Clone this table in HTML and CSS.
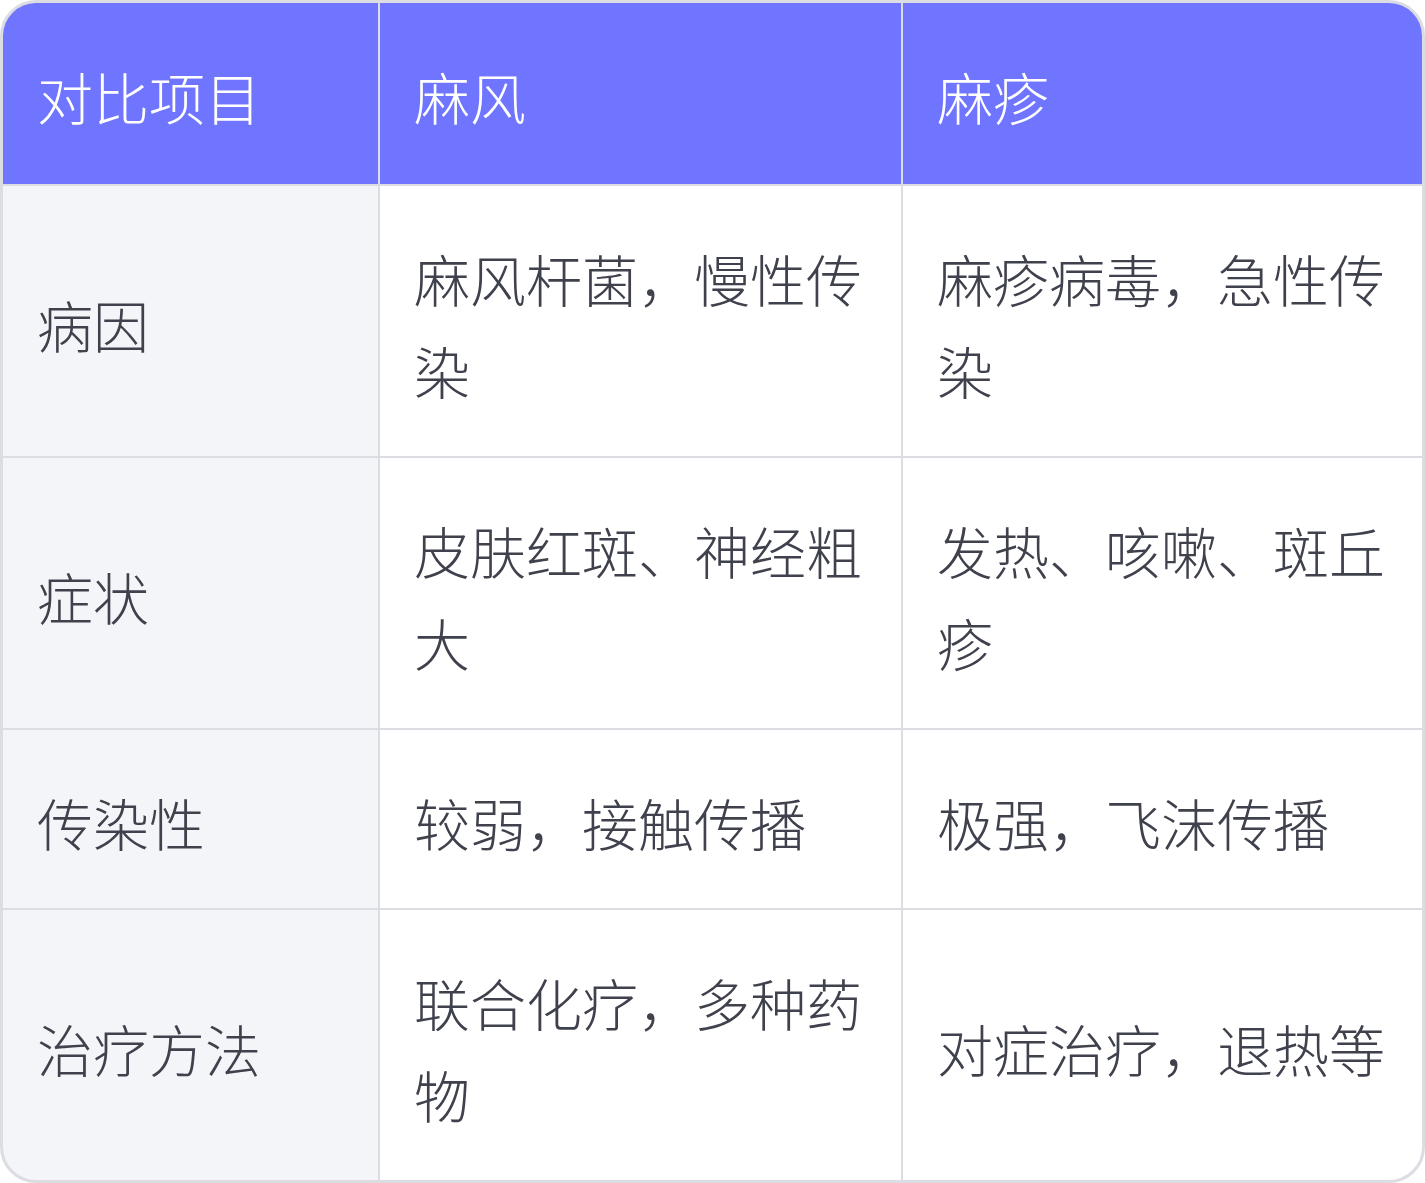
FILE: index.html
```html
<!DOCTYPE html>
<html lang="zh-CN">
<head>
<meta charset="utf-8">
<title>麻风与麻疹对比</title>
<link rel="stylesheet" href="styles.css">
</head>
<body>
<div class="table">
  <div class="cell head">对比项目</div>
  <div class="cell head">麻风</div>
  <div class="cell head">麻疹</div>

  <div class="cell label">病因</div>
  <div class="cell">麻风杆菌，慢性传染</div>
  <div class="cell">麻疹病毒，急性传染</div>

  <div class="cell label">症状</div>
  <div class="cell">皮肤红斑、神经粗大</div>
  <div class="cell">发热、咳嗽、斑丘疹</div>

  <div class="cell label">传染性</div>
  <div class="cell">较弱，接触传播</div>
  <div class="cell">极强，飞沫传播</div>

  <div class="cell label">治疗方法</div>
  <div class="cell">联合化疗，多种药物</div>
  <div class="cell">对症治疗，退热等</div>
</div>
</body>
</html>
```

FILE: styles.css
```css
html, body {
  margin: 0;
  padding: 0;
  background: #ffffff;
}

.table {
  box-sizing: border-box;
  width: 1425px;
  height: 1183px;
  display: grid;
  grid-template-columns: 375px 521px 519px;
  grid-template-rows: 181px 270px 270px 178px 270px;
  column-gap: 2px;
  row-gap: 2px;
  border: 3px solid #dcdce3;
  border-radius: 36px;
  overflow: hidden;
  background: #dcdce3;
  font-family: "Noto Sans CJK SC", "Noto Sans", sans-serif;
  font-weight: 300;
  font-size: 56px;
  line-height: 92px;
  color: #3f414c;
}

.cell {
  display: flex;
  align-items: center;
  padding: 5px 29px 0 34px;
  background: #ffffff;
  word-break: break-all;
}

.head {
  background: #6f75ff;
  color: #ffffff;
}

.label {
  background: #f4f5f9;
}
```
